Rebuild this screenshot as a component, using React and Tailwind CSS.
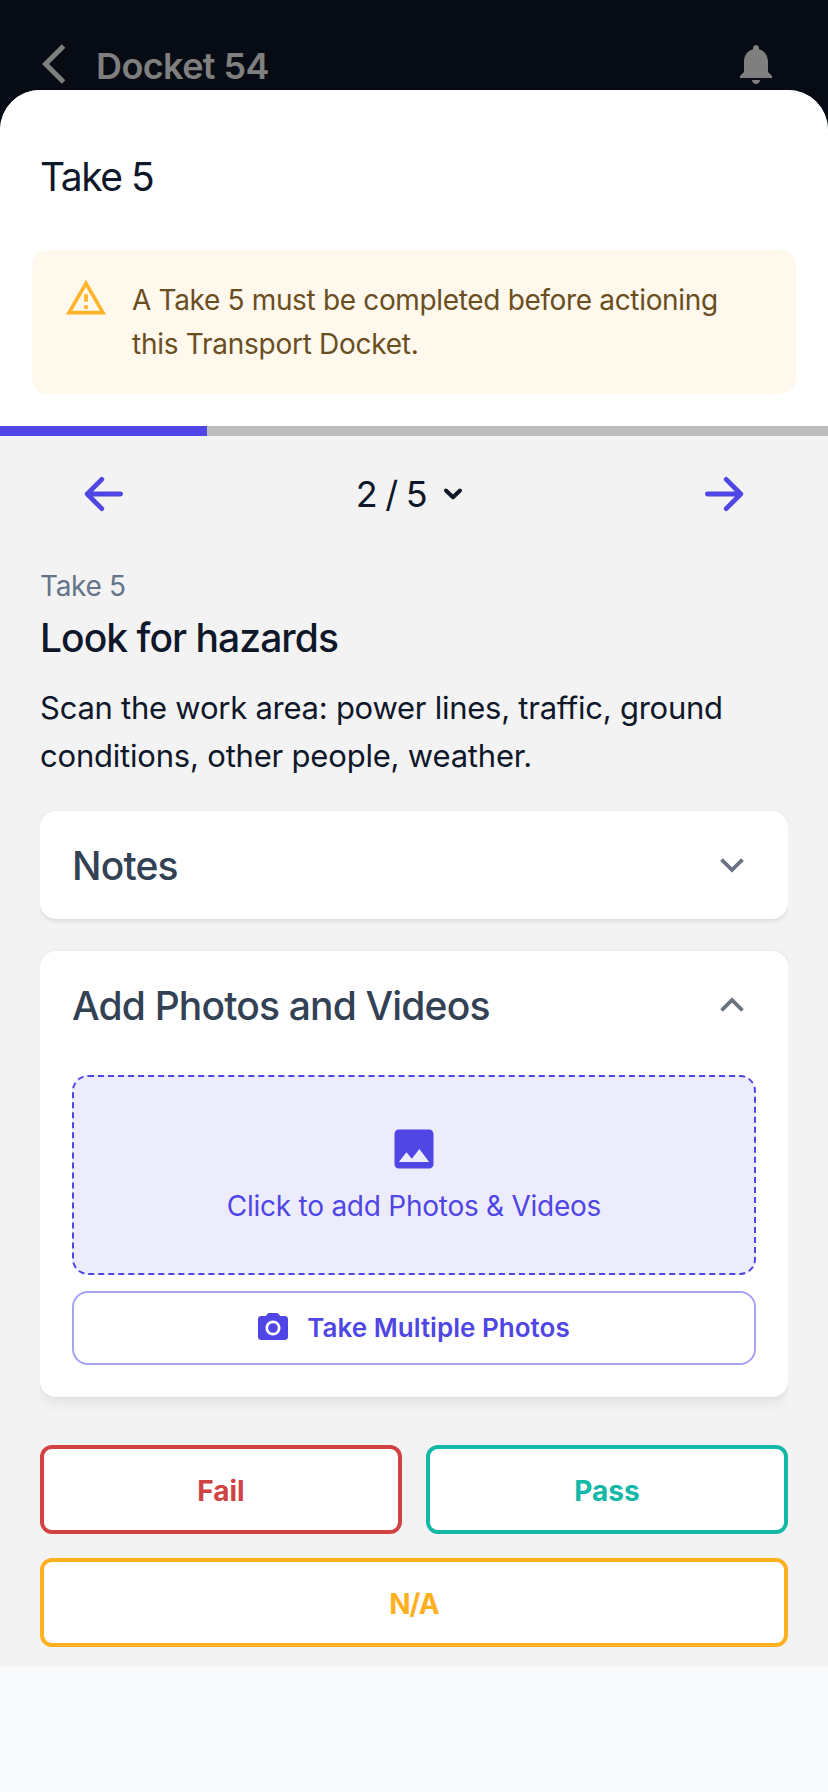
import React from "react";

function Svg({ className, children, viewBox = "0 0 24 24" }) {
  return (
    <svg viewBox={viewBox} fill="currentColor" className={className} aria-hidden="true">
      {children}
    </svg>
  );
}

function ArrowLeft({ className }) {
  return (
    <svg viewBox="0 0 44 44" className={className} fill="none" stroke="currentColor" strokeWidth="4.8" strokeLinecap="round" strokeLinejoin="round" aria-hidden="true">
      <path d="M19.8 7.4 5.2 22 19.8 36.6M5.8 22H38.6" />
    </svg>
  );
}

function Chevron({ className }) {
  return (
    <Svg className={className}>
      <path
        d="M16.59 8.84 12 13.42 7.41 8.84 6.35 9.95 12 15.6l5.65-5.65z"
        stroke="currentColor"
        strokeWidth="0.5"
        strokeLinejoin="round"
      />
    </Svg>
  );
}

function Header() {
  return (
    <header className="flex h-[90px] items-start bg-[#070b14] pt-10 pr-12 pl-[42px] text-[#7f7f7f]">
      <Svg className="size-12 shrink-0">
        <path d="M11.67 3.87 9.9 2.1 0 12l9.9 9.9 1.77-1.77L3.54 12z" />
      </Svg>
      <h1 className="ml-1.5 pt-1 text-[36px] leading-[44px] font-semibold tracking-[-0.6px] whitespace-nowrap">Docket 54</h1>
      <Svg className="ml-auto size-12 shrink-0">
        <path d="M12 22c1.1 0 2-.9 2-2h-4c0 1.1.89 2 2 2zm6-6v-5c0-3.07-1.64-5.64-4.5-6.32V4c0-.83-.67-1.5-1.5-1.5s-1.5.67-1.5 1.5v.68C7.63 5.36 6 7.92 6 11v5l-2 2v1h16v-1l-2-2z" />
      </Svg>
    </header>
  );
}

function Alert() {
  return (
    <div className="mx-8 flex h-36 gap-6 rounded-2xl bg-[#fff8ec] px-8 pt-[26px]">
      <Svg className="size-11 shrink-0 text-[#ffb42e]">
        <path d="M12 5.99 19.53 19H4.47L12 5.99M12 2 1 21h22L12 2zm1 14h-2v2h2v-2zm0-6h-2v4h2v-4z" />
      </Svg>
      <p className="pt-0.5 text-[28px] leading-[44px] tracking-[-0.34px] whitespace-nowrap text-[#6a4e1f]">
        A Take 5 must be completed before actioning
        <br />
        <span className="tracking-[-0.27px]">this Transport Docket.</span>
      </p>
    </div>
  );
}

function Pager() {
  return (
    <div className="flex h-[116px] items-center justify-between px-[82px] text-[#4f46e5]">
      <ArrowLeft className="size-11" />
      <div className="flex items-center gap-4 pr-2 text-[#0f172a]">
        <span className="text-[36px] leading-[44px] tracking-[-1.3px]">2 / 5</span>
        <svg viewBox="0 0 22 14" className="h-[14px] w-[22px]" fill="none" stroke="currentColor" strokeWidth="4" strokeLinecap="round" strokeLinejoin="round" aria-hidden="true">
          <path d="M4 3.5 11 10.2 18 3.5" />
        </svg>
      </div>
      <ArrowLeft className="size-11 rotate-180" />
    </div>
  );
}

function Card({ title, open, className, children }) {
  return (
    <section className={className}>
      <div className="flex h-[108px] items-center justify-between pr-8 pl-8">
        <h3 className="pt-0.5 text-[39px] leading-[48px] font-medium tracking-[-0.83px] text-[#334155]">{title}</h3>
        <Chevron className={open ? "size-12 rotate-180 text-[#6b7280]" : "size-12 text-[#6b7280]"} />
      </div>
      {children}
    </section>
  );
}

export default function App() {
  return (
    <div className="h-[1792px] w-[828px] overflow-hidden bg-[#070b14] font-['Inter','Liberation_Sans',sans-serif] antialiased">
      <Header />
      <main className="h-[1702px] overflow-hidden rounded-t-[40px] bg-[#f8fafc]">
        <div className="h-[336px] bg-white">
          <div className="flex h-40 items-center px-10 pt-[14px]">
            <h2 className="text-[39px] leading-[48px] tracking-[-1.5px] text-[#0f172a]">Take 5</h2>
          </div>
          <Alert />
        </div>
        <div className="h-[10px] bg-[#bdbdbd]">
          <div className="h-full w-1/4 bg-[#4f46e5]" />
        </div>
        <div className="h-[1231px] bg-[#f3f3f3]">
          <Pager />
          <div className="px-10">
            <div className="h-[259px] pt-3">
              <p className="text-[28px] leading-[44px] tracking-[-0.35px] text-[#64748b]">Take 5</p>
              <h2 className="pt-1.5 text-[39px] leading-[48px] font-medium tracking-[-0.95px] text-[#0f172a]">Look for hazards</h2>
              <p className="pt-[22px] text-[31px] leading-[48px] tracking-[-0.25px] whitespace-nowrap text-[#0f172a]">
                Scan the work area: power lines, traffic, ground
                <br />
                <span className="tracking-[-0.2px]">conditions, other people, weather.</span>
              </p>
            </div>
            <Card title="Notes" className="rounded-2xl bg-white shadow-[0_2px_4px_rgba(100,116,139,0.2)] [clip-path:inset(-24px_0px)]" />
            <Card
              title="Add Photos and Videos"
              open
              className="mt-8 h-[446px] rounded-2xl bg-white shadow-[0_6px_14px_-2px_rgba(100,116,139,0.16),0_0_4px_rgba(100,116,139,0.06)] [clip-path:inset(-24px_0px)]"
            >
              <div className="flex flex-col gap-4 px-8 pt-4">
                <button className="flex h-[200px] flex-col items-center rounded-2xl border-2 border-dashed border-[#4f46e5] bg-[#edecfc] pt-[46px] text-[#4f46e5]">
                  <Svg className="size-[52px]">
                    <path d="M21 19V5c0-1.1-.9-2-2-2H5c-1.1 0-2 .9-2 2v14c0 1.1.9 2 2 2h14c1.1 0 2-.9 2-2zM8.5 13.5l2.5 3.01L14.5 12l4.5 6H5l3.5-4.5z" />
                  </Svg>
                  <span className="pt-[9px] text-[28px] leading-[44px] tracking-[-0.25px]">Click to add Photos &amp; Videos</span>
                </button>
                <button className="flex h-[74px] items-center justify-center gap-4 rounded-2xl border-2 border-[#a7a2f2] pr-[3px] text-[#4f46e5]">
                  <Svg className="size-9">
                    <circle cx="12" cy="12" r="3.2" />
                    <path d="M9 2 7.17 4H4c-1.1 0-2 .9-2 2v12c0 1.1.9 2 2 2h16c1.1 0 2-.9 2-2V6c0-1.1-.9-2-2-2h-3.17L15 2H9zm3 15c-2.76 0-5-2.24-5-5s2.24-5 5-5 5 2.24 5 5-2.24 5-5 5z" />
                  </Svg>
                  <span className="text-[26px] leading-[40px] font-semibold tracking-[0.03px]">Take Multiple Photos</span>
                </button>
              </div>
            </Card>
            <div className="grid grid-cols-2 gap-6 pt-12 text-[28px] leading-[44px] font-bold">
              <button className="h-[89px] rounded-xl border-4 border-[#d14343] bg-white pt-0.5 text-[#d14343]">Fail</button>
              <button className="h-[89px] rounded-xl border-4 border-[#14b8a6] bg-white pt-0.5 text-[#14b8a6]">Pass</button>
              <button className="col-span-2 h-[89px] rounded-xl border-4 border-[#ffb020] bg-white pt-0.5 tracking-[-1px] text-[#ffb020]">N/A</button>
            </div>
          </div>
        </div>
      </main>
    </div>
  );
}
